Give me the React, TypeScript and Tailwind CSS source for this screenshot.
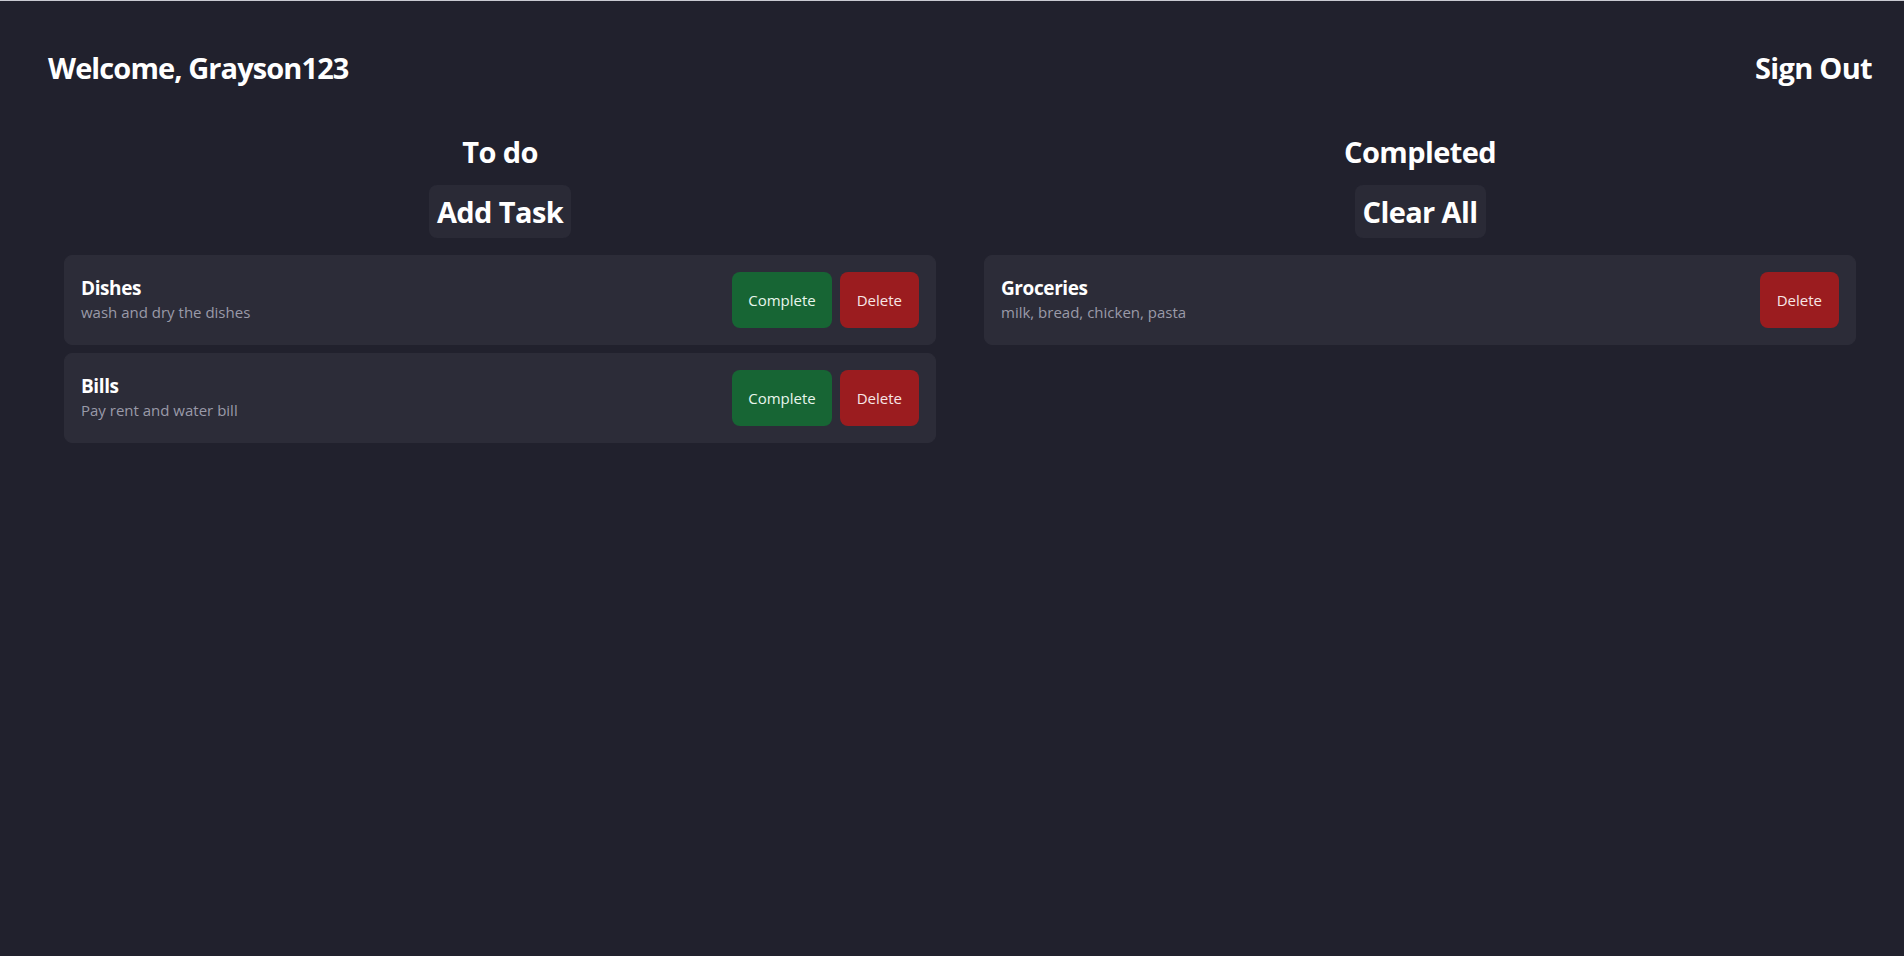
import { useState } from 'react';

interface Task {
  id: number;
  title: string;
  description: string;
}

const font = { fontFamily: '"Open Sans", "Noto Sans", sans-serif' };

function TaskCard({ task, done, onComplete, onDelete }: { task: Task; done?: boolean; onComplete?: () => void; onDelete: () => void }) {
  return (
    <div className="flex items-center justify-between rounded-lg border border-[#2c2c38] bg-[#2c2c38] p-4">
      <div className="flex flex-col">
        <span className="text-[19px] font-bold leading-6 tracking-[-0.4px] text-white">{task.title}</span>
        <span className="text-[15px] leading-6 text-[#9a9aa8]">{task.description}</span>
      </div>
      <div className="flex gap-2">
        {!done && (
          <button onClick={onComplete} className="h-14 rounded-lg bg-[#176534] px-4 text-[15px] text-[#e8f5ec]">
            Complete
          </button>
        )}
        <button onClick={onDelete} className="h-14 rounded-lg bg-[#9b1c1f] px-[17px] text-[15px] text-[#f7e5e5]">
          Delete
        </button>
      </div>
    </div>
  );
}

export default function App() {
  const [todo, setTodo] = useState<Task[]>([
    { id: 1, title: 'Dishes', description: 'wash and dry the dishes' },
    { id: 2, title: 'Bills', description: 'Pay rent and water bill' },
  ]);
  const [completed, setCompleted] = useState<Task[]>([
    { id: 3, title: 'Groceries', description: 'milk, bread, chicken, pasta' },
  ]);

  const complete = (t: Task) => {
    setTodo(todo.filter((x) => x.id !== t.id));
    setCompleted([...completed, t]);
  };

  return (
    <div className="min-h-[956px] border-t border-[#c9cad2] bg-[#21212d] text-white" style={font}>
      <header className="flex items-center justify-between pl-12 pr-8 pt-[49px]">
        <h1 className="text-[29px] font-bold leading-9 tracking-[-0.9px]">Welcome, Grayson123</h1>
        <button className="text-[29px] font-bold leading-9 tracking-[-0.7px]">Sign Out</button>
      </header>

      <main className="grid grid-cols-2 gap-4 pl-12 pr-8 pt-12">
        <section className="flex flex-col px-4">
          <h2 className="text-center text-[29px] font-bold leading-9 tracking-[-0.6px]">To do</h2>
          <div className="mt-[15px] flex justify-center">
            <button className="rounded-lg bg-[#2a2a36] px-2 py-[8.5px] text-[29px] font-bold leading-9 tracking-[-0.6px]">
              Add Task
            </button>
          </div>
          <div className="mt-[17px] flex flex-col gap-2">
            {todo.map((t) => (
              <TaskCard
                key={t.id}
                task={t}
                onComplete={() => complete(t)}
                onDelete={() => setTodo(todo.filter((x) => x.id !== t.id))}
              />
            ))}
          </div>
        </section>

        <section className="flex flex-col px-4">
          <h2 className="text-center text-[29px] font-bold leading-9 tracking-[-0.6px]">Completed</h2>
          <div className="mt-[15px] flex justify-center">
            <button
              onClick={() => setCompleted([])}
              className="rounded-lg bg-[#2a2a36] px-2 py-[8.5px] text-[29px] font-bold leading-9 tracking-[-0.6px]"
            >
              Clear All
            </button>
          </div>
          <div className="mt-[17px] flex flex-col gap-2">
            {completed.map((t) => (
              <TaskCard key={t.id} task={t} done onDelete={() => setCompleted(completed.filter((x) => x.id !== t.id))} />
            ))}
          </div>
        </section>
      </main>
    </div>
  );
}
